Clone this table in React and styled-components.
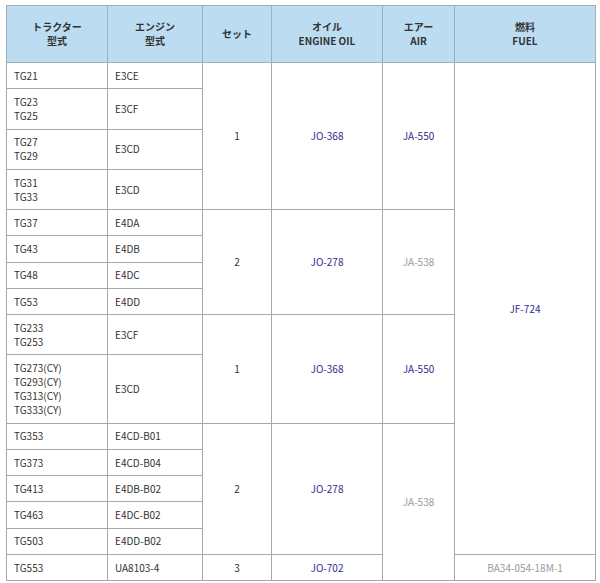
import styled, { createGlobalStyle } from "styled-components";

const GlobalStyle = createGlobalStyle`
  body {
    margin: 0;
    background: #fff;
    font-family: "Noto Sans CJK JP", "Noto Sans", sans-serif;
  }
`;

const head = [
  ["トラクター", "型式"],
  ["エンジン", "型式"],
  ["セット"],
  ["オイル", "ENGINE OIL"],
  ["エアー", "AIR"],
  ["燃料", "FUEL"],
];

const widths = [101, 95, 69, 111, 72, 141];

// each row: tractor lines, engine, and the merged cells that start on it
const rows = [
  { tg: ["TG21"], eng: "E3CE", set: ["1", 4], oil: ["JO-368", 4], air: ["JA-550", 4, true], fuel: ["JF-724", 15, true] },
  { tg: ["TG23", "TG25"], eng: "E3CF" },
  { tg: ["TG27", "TG29"], eng: "E3CD" },
  { tg: ["TG31", "TG33"], eng: "E3CD" },
  { tg: ["TG37"], eng: "E4DA", set: ["2", 4], oil: ["JO-278", 4], air: ["JA-538", 4, false] },
  { tg: ["TG43"], eng: "E4DB" },
  { tg: ["TG48"], eng: "E4DC" },
  { tg: ["TG53"], eng: "E4DD" },
  { tg: ["TG233", "TG253"], eng: "E3CF", set: ["1", 2], oil: ["JO-368", 2], air: ["JA-550", 2, true] },
  { tg: ["TG273(CY)", "TG293(CY)", "TG313(CY)", "TG333(CY)"], eng: "E3CD" },
  { tg: ["TG353"], eng: "E4CD-B01", set: ["2", 5], oil: ["JO-278", 5], air: ["JA-538", 6, false] },
  { tg: ["TG373"], eng: "E4CD-B04" },
  { tg: ["TG413"], eng: "E4DB-B02" },
  { tg: ["TG463"], eng: "E4DC-B02" },
  { tg: ["TG503"], eng: "E4DD-B02" },
  { tg: ["TG553"], eng: "UA8103-4", set: ["3", 1], oil: ["JO-702", 1], fuel: ["BA34-054-18M-1", 1, false] },
];

export default function App() {
  return (
    <Page>
      <GlobalStyle />
      <Table>
        <colgroup>
          {widths.map((w, i) => (
            <col key={i} style={{ width: w }} />
          ))}
        </colgroup>
        <thead>
          <tr>
            {head.map((h, i) => (
              <Th key={i}>
                {h.map((t, j) => (
                  <div key={j}>{t}</div>
                ))}
              </Th>
            ))}
          </tr>
        </thead>
        <tbody>
          {rows.map((r, i) => (
            <tr key={i}>
              <Td>
                {r.tg.map((t) => (
                  <div key={t}>{t}</div>
                ))}
              </Td>
              <Td>{r.eng}</Td>
              {r.set && (
                <Td $center rowSpan={r.set[1]}>
                  {r.set[0]}
                </Td>
              )}
              {r.oil && (
                <Td $center $tone="link" rowSpan={r.oil[1]}>
                  {r.oil[0]}
                </Td>
              )}
              {r.air && (
                <Td $center $tone={r.air[2] ? "link" : "muted"} rowSpan={r.air[1]}>
                  {r.air[0]}
                </Td>
              )}
              {r.fuel && (
                <Td $center $tone={r.fuel[2] ? "link" : "muted"} rowSpan={r.fuel[1]}>
                  {r.fuel[0]}
                </Td>
              )}
            </tr>
          ))}
        </tbody>
      </Table>
    </Page>
  );
}

const Page = styled.div`
  padding: 5px 5px 0 6px;
`;

const Table = styled.table`
  width: 589px;
  table-layout: fixed;
  border-collapse: collapse;
  font-size: 10px;
  line-height: 14px;
  color: #333;
`;

const Th = styled.th`
  height: 56px;
  padding: 0 6px;
  background: #bcdcf2;
  border: 1px solid #a3adb6;
  font-weight: 700;
  color: #333;
  text-align: center;
  vertical-align: middle;
`;

const Td = styled.td`
  padding: 5.75px 7px 5.5px;
  border: 1px solid #a8a8a8;
  vertical-align: middle;
  text-align: ${(p) => (p.$center ? "center" : "left")};
  color: ${(p) =>
    p.$tone === "link" ? "#2e2e8c" : p.$tone === "muted" ? "#9a9a9a" : "#333"};
`;
